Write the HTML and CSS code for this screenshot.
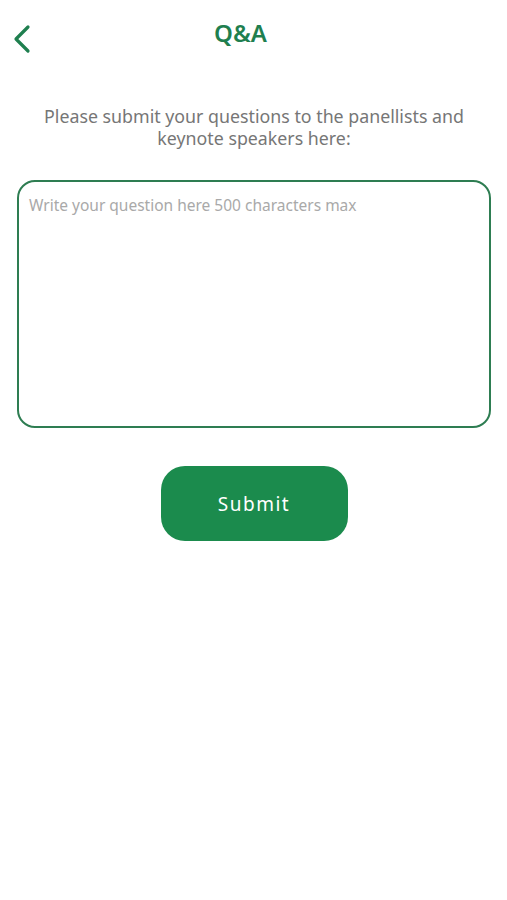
FILE: index.html
```html
<!DOCTYPE html>
<html lang="en">
<head>
    <meta charset="UTF-8">
    <meta name="viewport" content="width=device-width, initial-scale=1.0">
    <title>Q&amp;A</title>
    <link rel="stylesheet" href="styles.css">
</head>
<body>
    <header class="topbar">
        <button class="back" aria-label="Back">
            <svg width="20" height="30" viewBox="0 0 20 30">
                <path d="M16 3 L4 15 L16 27" fill="none" stroke="#1f7f4f" stroke-width="3.2" stroke-linecap="round" stroke-linejoin="round"/>
            </svg>
        </button>
        <h1 class="title">Q&amp;A</h1>
    </header>

    <main class="content">
        <p class="intro">Please submit your questions to the panellists and keynote speakers here:</p>
        <textarea class="question" maxlength="500" placeholder="Write your question here 500 characters max"></textarea>
        <div class="actions">
            <button class="submit">Submit</button>
        </div>
    </main>
</body>
</html>
```

FILE: styles.css
```css
body {
    font-family: "Noto Sans", "Open Sans", sans-serif;
    background-color: #fff;
    margin: 0;
}

.topbar {
    position: relative;
    height: 66px;
    display: flex;
    align-items: center;
    justify-content: center;
}

.back {
    position: absolute;
    left: 12px;
    top: 24px;
    background: none;
    border: none;
    padding: 0;
    cursor: pointer;
}

.title {
    margin: 0 0 0 -26px;
    padding-bottom: 2px;
    font-size: 24px;
    font-weight: 600;
    color: #1f7f4f;
}

.content {
    padding: 39px 16px 0 17px;
}

.intro {
    margin: 0 22px;
    text-align: center;
    font-size: 17.8px;
    line-height: 22px;
    color: #767676;
}

.question {
    display: block;
    box-sizing: border-box;
    width: 474px;
    height: 248px;
    margin-top: 31px;
    padding: 12px 10px;
    border: 2px solid #2e7d52;
    border-radius: 18px;
    font-family: inherit;
    font-size: 15.5px;
    color: #444;
    resize: none;
    outline: none;
}

.question::placeholder {
    color: #a9a9a9;
}

.actions {
    display: flex;
    justify-content: center;
    margin-top: 38px;
}

.submit {
    width: 187px;
    height: 75px;
    border: none;
    border-radius: 24px;
    background-color: #1b8b4d;
    color: #fff;
    font-family: inherit;
    font-size: 19px;
    letter-spacing: 1.5px;
}
```
